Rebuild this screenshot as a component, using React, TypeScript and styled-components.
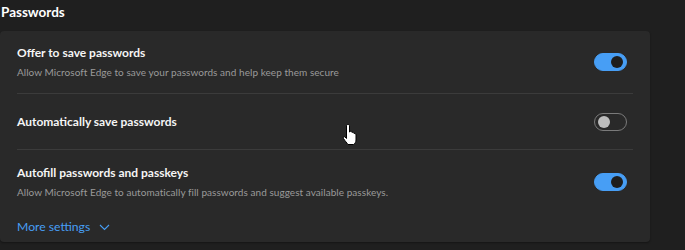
import styled, { createGlobalStyle } from 'styled-components'

const GlobalStyle = createGlobalStyle`
  html, body {
    margin: 0;
    padding: 0;
    background: #1f1f1f;
  }
  body {
    font-family: Lato, "Noto Sans", Arial, sans-serif;
    -webkit-font-smoothing: antialiased;
  }
`

const Page = styled.div`
  position: relative;
  width: 685px;
  height: 250px;
  overflow: hidden;
  background: #1f1f1f;
  padding-right: 35px;
  box-sizing: border-box;
`

const Heading = styled.h2`
  margin: 0 0 7px 1px;
  height: 24px;
  line-height: 24px;
  font-size: 13.5px;
  font-weight: 700;
  color: #ffffff;
`

const Card = styled.div`
  background: #292929;
  border-radius: 4px;
  padding: 0 17px;
  box-shadow: 0 1px 2px rgba(0, 0, 0, 0.35);
`

const Row = styled.div<{ $height: number; $divider?: boolean }>`
  display: flex;
  align-items: center;
  justify-content: space-between;
  height: ${p => p.$height}px;
  box-sizing: border-box;
  ${p => (p.$divider ? 'border-top: 1px solid #3b3b3b;' : '')}
`

const TextCol = styled.div`
  display: flex;
  flex-direction: column;
  gap: 2px;
`

const Title = styled.div`
  font-size: 12px;
  font-weight: 700;
  line-height: 18px;
  color: #f5f5f5;
`

const Sub = styled.div`
  font-size: 10px;
  line-height: 16px;
  color: #9a9a9a;
  letter-spacing: 0.05px;
`

const Toggle = styled.div<{ $on: boolean }>`
  display: flex;
  align-items: center;
  justify-content: ${p => (p.$on ? 'flex-end' : 'flex-start')};
  width: 33px;
  height: 18px;
  box-sizing: border-box;
  border-radius: 9px;
  padding: 0 3px;
  margin-right: 6px;
  background: ${p => (p.$on ? '#479ef5' : 'transparent')};
  border: 1px solid ${p => (p.$on ? '#479ef5' : '#7a7a7a')};
`

const Knob = styled.div<{ $on: boolean }>`
  width: 12px;
  height: 12px;
  border-radius: 50%;
  background: ${p => (p.$on ? '#1e1e1e' : '#bdbdbd')};
`

const MoreRow = styled.div`
  display: flex;
  align-items: center;
  gap: 9px;
  padding: 4px 0 5px;
  line-height: 20px;
  font-size: 12.2px;
  color: #479ef5;
`

const Cursor = styled.svg`
  position: absolute;
  left: 342px;
  top: 124px;
`

const rows = [
  {
    title: 'Offer to save passwords',
    sub: 'Allow Microsoft Edge to save your passwords and help keep them secure',
    on: true,
    height: 62,
  },
  { title: 'Automatically save passwords', on: false, height: 56 },
  {
    title: 'Autofill passwords and passkeys',
    sub: 'Allow Microsoft Edge to automatically fill passwords and suggest available passkeys.',
    on: true,
    height: 64,
  },
]

export default function App() {
  return (
    <Page>
      <GlobalStyle />
      <Heading>Passwords</Heading>
      <Card>
        {rows.map((r, i) => (
          <Row key={r.title} $height={r.height} $divider={i > 0}>
            <TextCol>
              <Title>{r.title}</Title>
              {r.sub && <Sub>{r.sub}</Sub>}
            </TextCol>
            <Toggle $on={r.on}>
              <Knob $on={r.on} />
            </Toggle>
          </Row>
        ))}
        <MoreRow>
          More settings
          <svg width="11" height="7" viewBox="0 0 11 7">
            <path d="M1 1 L5.5 5.5 L10 1" fill="none" stroke="#479ef5" strokeWidth="1.1" />
          </svg>
        </MoreRow>
      </Card>
      <Cursor width="17" height="22" viewBox="0 0 17 22">
        <path
          d="M6 0.5 C7 0.5 7.5 1 7.5 2 L7.5 8 C8.5 6.8 10 7.2 10 8.5 C11 7.8 12 8.5 12 9.5 C13 9.2 14 9.8 14 11 L14 16 C14 18 13 19.5 11.5 20.5 L6 20.5 C5 19 3 17 1.5 14.5 C1 13.5 1.5 12.3 2.8 12.8 L4.5 14.5 L4.5 2 C4.5 1 5 0.5 6 0.5 Z"
          fill="#ffffff"
          stroke="#000000"
          strokeWidth="1"
        />
      </Cursor>
    </Page>
  )
}
